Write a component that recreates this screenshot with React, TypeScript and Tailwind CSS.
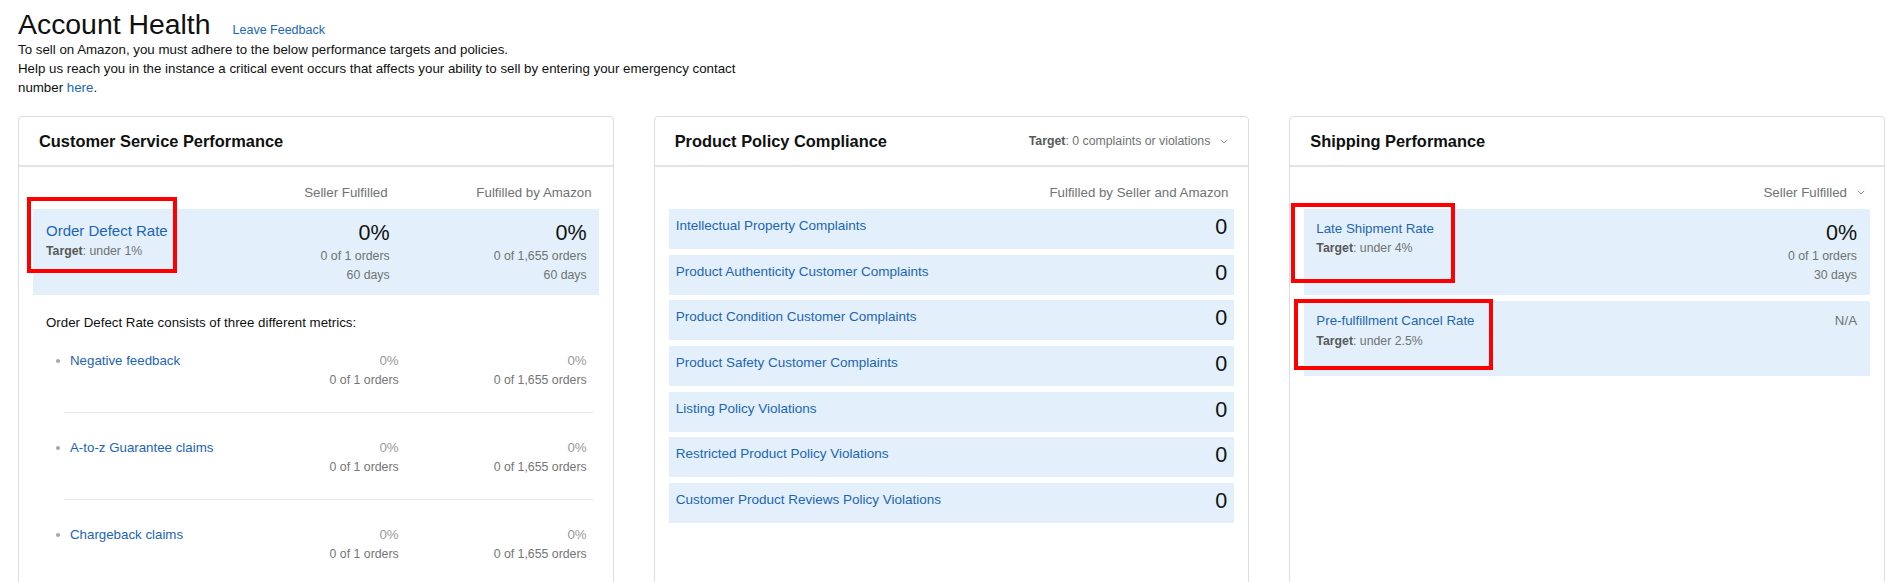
import React from "react";

const LINK = "text-[#1c65b4]";

function Chevron() {
  return (
    <svg width="8" height="5" viewBox="0 0 8 5" fill="none" className="ml-[10px]">
      <path d="M0.8 0.8L4 4L7.2 0.8" stroke="#8c8c8c" strokeWidth="1" />
    </svg>
  );
}

function Card({
  title,
  right,
  children,
}: {
  title: string;
  right?: React.ReactNode;
  children: React.ReactNode;
}) {
  return (
    <section className="rounded-[4px] border border-[#dddddd] bg-white">
      <div className="flex h-[50px] items-center justify-between border-b-2 border-[#e3e3e3] px-[20px]">
        <h2 className="text-[16.4px] font-bold text-[#0f1111]">{title}</h2>
        {right}
      </div>
      <div className="px-[14px] pt-[16px] pb-[40px]">{children}</div>
    </section>
  );
}

function Target({ value, lead }: { value: string; lead: string }) {
  return (
    <div className={"text-[12.3px] text-[#6f7373] " + lead}>
      <span className="font-bold text-[#565959]">Target</span>: {value}
    </div>
  );
}

function RedMark({ className }: { className: string }) {
  return <div className={"pointer-events-none absolute border-[4px] border-[#ff0000] " + className} />;
}

const subMetrics = ["Negative feedback", "A-to-z Guarantee claims", "Chargeback claims"];

const policyRows = [
  "Intellectual Property Complaints",
  "Product Authenticity Customer Complaints",
  "Product Condition Customer Complaints",
  "Product Safety Customer Complaints",
  "Listing Policy Violations",
  "Restricted Product Policy Violations",
  "Customer Product Reviews Policy Violations",
];

function CustomerService() {
  return (
    <Card title="Customer Service Performance">
      {/* column headings */}
      <div className="flex pr-[7px] text-[13.3px] leading-[19px] text-[#6f7373]">
        <div className="flex-1" />
        <div className="w-[204px] text-right">Seller Fulfilled</div>
        <div className="w-[204px] text-right">Fulfilled by Amazon</div>
      </div>

      {/* Order defect rate */}
      <div className="relative mt-[7px] flex bg-[#e3f0fb] py-[10px] pr-[12px] pl-[13px]">
        <div className="flex-1">
          <div className={"text-[15px] leading-[23px] " + LINK}>Order Defect Rate</div>
          <Target value="under 1%" lead="leading-[18px]" />
        </div>
        <div className="w-[197px] text-right">
          <div className="text-[21.5px] leading-[28px]">0%</div>
          <div className="text-[12.3px] leading-[19px] text-[#6f7373]">0 of 1 orders</div>
          <div className="text-[12.3px] leading-[19px] text-[#6f7373]">60 days</div>
        </div>
        <div className="w-[197px] text-right">
          <div className="text-[21.5px] leading-[28px]">0%</div>
          <div className="text-[12.3px] leading-[19px] text-[#6f7373]">0 of 1,655 orders</div>
          <div className="text-[12.3px] leading-[19px] text-[#6f7373]">60 days</div>
        </div>
        <RedMark className="top-[-12px] left-[-6px] h-[76px] w-[150px]" />
      </div>

      <p className="mt-[18px] pl-[13px] text-[13.3px] leading-[19px]">
        Order Defect Rate consists of three different metrics:
      </p>

      <div className="mt-[19px] ml-[21px] pr-[12px]">
        {subMetrics.map((name, i) => (
          <div key={name}>
            <div className={i === 0 ? "" : "pt-[25px]"}>
              <div className="flex text-[13.3px] leading-[19px]">
                <div className="flex h-[19px] w-[16px] shrink-0 items-center pl-[2px]">
                  <span className="block h-[4px] w-[4px] rounded-full bg-[#a6a6a6]" />
                </div>
                <div className={"min-w-0 flex-1 whitespace-nowrap " + LINK}>{name}</div>
                <div className="w-[188px] shrink-0 text-right text-[#9a9a9a]">0%</div>
                <div className="w-[188px] shrink-0 text-right text-[#9a9a9a]">0%</div>
              </div>
              <div className="flex text-[12.3px] leading-[20px] text-[#767676]">
                <div className="flex-1" />
                <div className="w-[188px] text-right">0 of 1 orders</div>
                <div className="w-[188px] text-right">0 of 1,655 orders</div>
              </div>
            </div>
            {i < subMetrics.length - 1 && (
              <div className="mt-[22px] mr-[-6px] ml-[10px] h-px bg-[#e7e7e7]" />
            )}
          </div>
        ))}
      </div>
    </Card>
  );
}

function PolicyCompliance() {
  return (
    <Card
      title="Product Policy Compliance"
      right={
        <div className="flex items-center text-[12.3px] text-[#6f7373]">
          <span className="font-bold text-[#565959]">Target</span>
          <span>: 0 complaints or violations</span>
          <Chevron />
        </div>
      }
    >
      <div className="pr-[6px] text-right text-[13.3px] leading-[19px] text-[#6f7373]">
        Fulfilled by Seller and Amazon
      </div>
      <div className="mt-[7px] flex flex-col gap-[5.7px]">
        {policyRows.map((row) => (
          <div
            key={row}
            className="flex h-[40px] items-start justify-between bg-[#e3f0fb] px-[7px] pt-[7px]"
          >
            <div className={"text-[13.5px] leading-[19px] " + LINK}>{row}</div>
            <div className="mt-[-3px] text-[21.5px] leading-[28px]">0</div>
          </div>
        ))}
      </div>
    </Card>
  );
}

function ShippingPerformance() {
  return (
    <Card title="Shipping Performance">
      <div className="flex items-center justify-end pr-[5px] text-[13.3px] leading-[19px] text-[#6f7373]">
        <span>Seller Fulfilled</span>
        <Chevron />
      </div>

      <div className="relative mt-[7px] flex bg-[#e3f0fb] py-[10px] pr-[13px] pl-[12px]">
        <div className="flex-1">
          <div className={"text-[13.3px] leading-[20px] " + LINK}>Late Shipment Rate</div>
          <Target value="under 4%" lead="leading-[19px]" />
        </div>
        <div className="text-right">
          <div className="text-[21.5px] leading-[28px]">0%</div>
          <div className="text-[12.3px] leading-[19px] text-[#6f7373]">0 of 1 orders</div>
          <div className="text-[12.3px] leading-[19px] text-[#6f7373]">30 days</div>
        </div>
        <RedMark className="top-[-6px] left-[-13px] h-[80px] w-[164px]" />
      </div>

      <div className="relative mt-[6px] flex bg-[#e3f0fb] pt-[9px] pr-[13px] pb-[25px] pl-[12px]">
        <div className="flex-1">
          <div className={"text-[13.3px] leading-[21px] " + LINK}>Pre-fulfillment Cancel Rate</div>
          <Target value="under 2.5%" lead="leading-[20px]" />
        </div>
        <div className="text-[13.3px] leading-[21px] text-[#6f7373]">N/A</div>
        <RedMark className="top-[-2px] left-[-10px] h-[71px] w-[199px]" />
      </div>
    </Card>
  );
}

export default function App() {
  return (
    <div className="min-h-screen bg-white px-[18px] font-['Liberation_Sans',Arial,sans-serif] text-[#0f1111]">
      {/* Page heading */}
      <div className="flex items-baseline pt-[8px]">
        <h1 className="text-[28.4px] leading-[32px] font-normal">Account Health</h1>
        <a className={"ml-[22px] text-[12.5px] " + LINK}>Leave Feedback</a>
      </div>
      <p className="text-[13.3px] leading-[19px]">
        To sell on Amazon, you must adhere to the below performance targets and policies.
        <br />
        Help us reach you in the instance a critical event occurs that affects your ability to sell by
        entering your emergency contact
        <br />
        number <a className={LINK}>here</a>.
      </p>

      {/* Cards */}
      <div className="mt-[19px] grid grid-cols-3 gap-x-[40px]">
        <CustomerService />
        <PolicyCompliance />
        <ShippingPerformance />
      </div>
    </div>
  );
}
